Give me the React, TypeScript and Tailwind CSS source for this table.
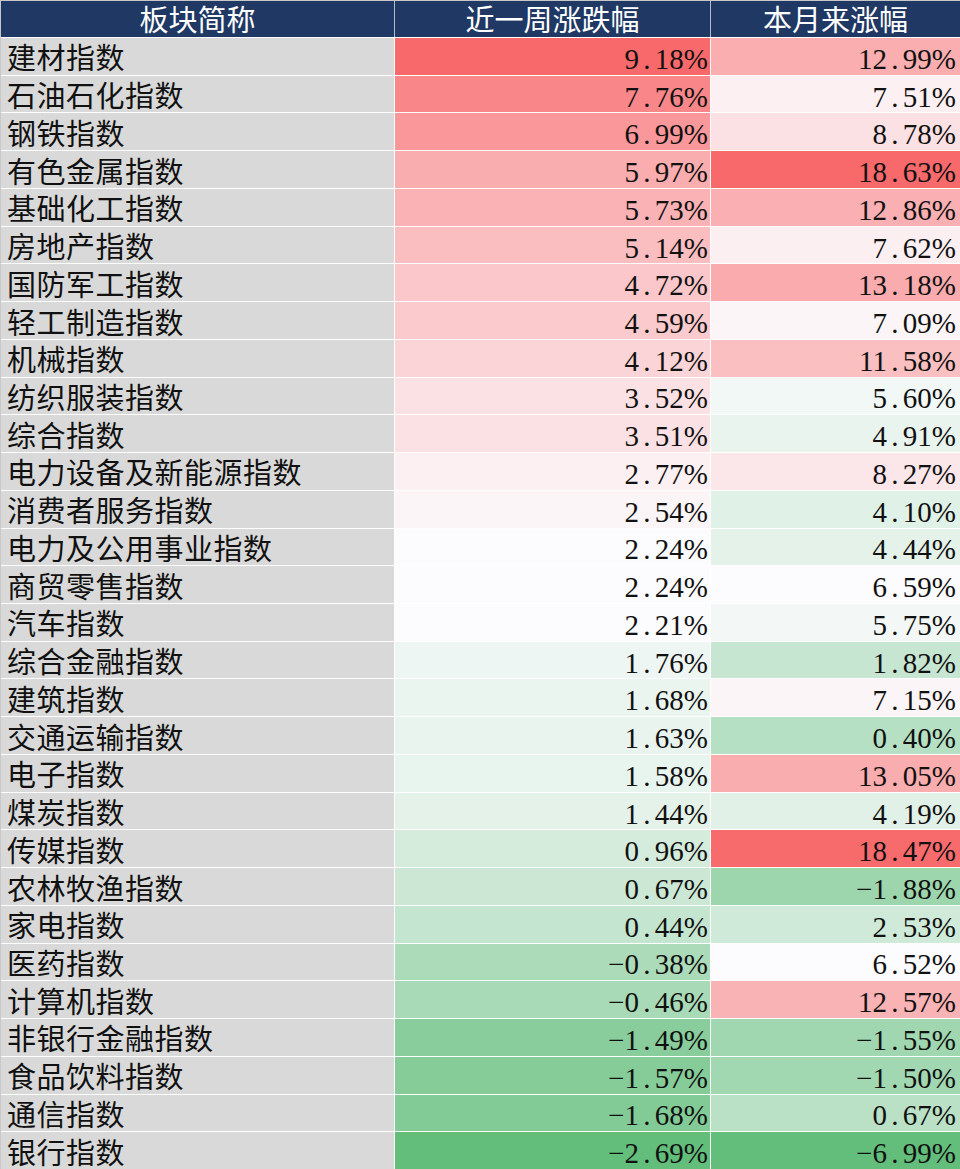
import React from "react";

type Row = { name: string; week: number; month: number };

const rows: Row[] = [
  { name: "建材指数", week: 9.18, month: 12.99 },
  { name: "石油石化指数", week: 7.76, month: 7.51 },
  { name: "钢铁指数", week: 6.99, month: 8.78 },
  { name: "有色金属指数", week: 5.97, month: 18.63 },
  { name: "基础化工指数", week: 5.73, month: 12.86 },
  { name: "房地产指数", week: 5.14, month: 7.62 },
  { name: "国防军工指数", week: 4.72, month: 13.18 },
  { name: "轻工制造指数", week: 4.59, month: 7.09 },
  { name: "机械指数", week: 4.12, month: 11.58 },
  { name: "纺织服装指数", week: 3.52, month: 5.6 },
  { name: "综合指数", week: 3.51, month: 4.91 },
  { name: "电力设备及新能源指数", week: 2.77, month: 8.27 },
  { name: "消费者服务指数", week: 2.54, month: 4.1 },
  { name: "电力及公用事业指数", week: 2.24, month: 4.44 },
  { name: "商贸零售指数", week: 2.24, month: 6.59 },
  { name: "汽车指数", week: 2.21, month: 5.75 },
  { name: "综合金融指数", week: 1.76, month: 1.82 },
  { name: "建筑指数", week: 1.68, month: 7.15 },
  { name: "交通运输指数", week: 1.63, month: 0.4 },
  { name: "电子指数", week: 1.58, month: 13.05 },
  { name: "煤炭指数", week: 1.44, month: 4.19 },
  { name: "传媒指数", week: 0.96, month: 18.47 },
  { name: "农林牧渔指数", week: 0.67, month: -1.88 },
  { name: "家电指数", week: 0.44, month: 2.53 },
  { name: "医药指数", week: -0.38, month: 6.52 },
  { name: "计算机指数", week: -0.46, month: 12.57 },
  { name: "非银行金融指数", week: -1.49, month: -1.55 },
  { name: "食品饮料指数", week: -1.57, month: -1.5 },
  { name: "通信指数", week: -1.68, month: 0.67 },
  { name: "银行指数", week: -2.69, month: -6.99 },
];

// Excel style 3-colour scale: min green, median white, max red
const GREEN = [0x63, 0xbe, 0x7b];
const WHITE = [0xfc, 0xfc, 0xff];
const RED = [0xf8, 0x69, 0x6b];

function median(vals: number[]) {
  const s = [...vals].sort((a, b) => a - b);
  const m = s.length / 2;
  return s.length % 2 ? s[Math.floor(m)] : (s[m - 1] + s[m]) / 2;
}

function mix(a: number[], b: number[], t: number) {
  const c = a.map((v, i) => Math.round(v + (b[i] - v) * t));
  return `rgb(${c[0]}, ${c[1]}, ${c[2]})`;
}

function makeScale(vals: number[]) {
  const min = Math.min(...vals);
  const max = Math.max(...vals);
  const mid = median(vals);
  return (v: number) =>
    v >= mid ? mix(WHITE, RED, (v - mid) / (max - mid)) : mix(WHITE, GREEN, (mid - v) / (mid - min));
}

const weekColor = makeScale(rows.map((r) => r.week));
const monthColor = makeScale(rows.map((r) => r.month));

const font = { fontFamily: '"Liberation Serif", "Noto Sans CJK SC", serif' };

function Pct({ v }: { v: number }) {
  const [int, dec] = Math.abs(v).toFixed(2).split(".");
  return (
    <span>
      {v < 0 ? "−" : ""}
      {int}
      <span className="inline-block w-[0.55em] text-center">.</span>
      {dec}%
    </span>
  );
}

export default function App() {
  return (
    <div className="w-[960px] h-[1169px] bg-white flex flex-col gap-px border-t border-l border-[#c8c8c8] text-[29px] leading-none text-[#111]" style={font}>
      {/* Header */}
      <div className="h-[36px] grid grid-cols-[393px_315px_1fr] gap-px bg-[#b4bccb] shrink-0">
        <div className="bg-[#1f3864] text-white flex items-center justify-center pt-[5px]">板块简称</div>
        <div className="bg-[#1f3864] text-white flex items-center justify-center pt-[5px]">近一周涨跌幅</div>
        <div className="bg-[#1f3864] text-white flex items-center justify-center pt-[5px]">本月来涨幅</div>
      </div>

      {rows.map((r) => (
        <div key={r.name} className="flex-1 grid grid-cols-[393px_315px_1fr] gap-px">
          <div className="bg-[#d9d9d9] flex items-center pl-[6px] pt-[7px] tracking-[0.5px]">{r.name}</div>
          <div className="flex items-center justify-end pr-[2px] pt-[6px]" style={{ backgroundColor: weekColor(r.week) }}>
            <Pct v={r.week} />
          </div>
          <div className="flex items-center justify-end pr-[4px] pt-[6px]" style={{ backgroundColor: monthColor(r.month) }}>
            <Pct v={r.month} />
          </div>
        </div>
      ))}
    </div>
  );
}
